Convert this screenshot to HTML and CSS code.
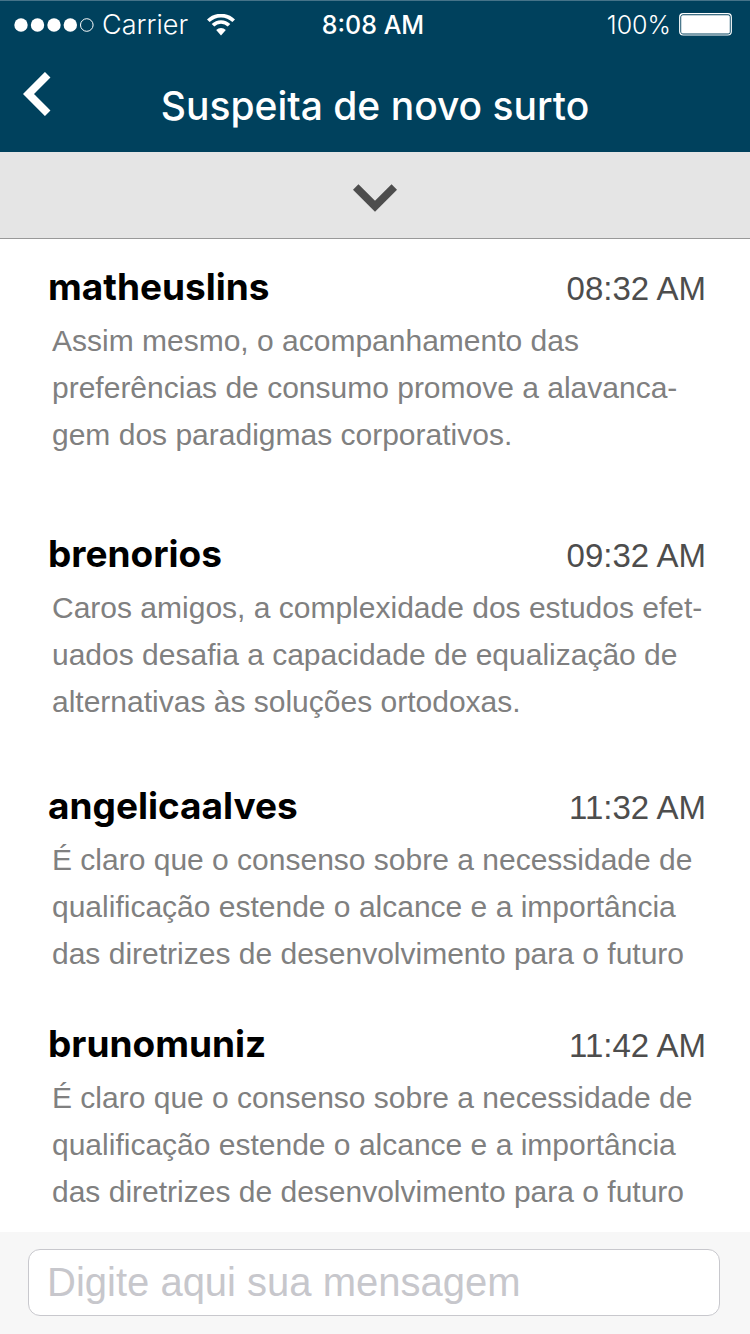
FILE: index.html
```html
<!DOCTYPE html>
<html lang="pt-BR">
<head>
<meta charset="utf-8">
<meta name="viewport" content="width=device-width, initial-scale=1">
<title>Suspeita de novo surto</title>
<link rel="stylesheet" href="styles.css">
</head>
<body>
<div class="app">
  <header class="header">
    <div class="status">
      <div class="status-left">
        <svg class="signal" viewBox="0 0 80 16" width="80" height="16" aria-hidden="true">
          <g fill="#fff"><circle cx="7" cy="8" r="6.7"/><circle cx="23.5" cy="8" r="6.7"/><circle cx="40" cy="8" r="6.7"/><circle cx="56.3" cy="8" r="6.7"/></g>
          <circle cx="72.8" cy="8" r="6.3" fill="none" stroke="#fff"/>
        </svg>
        <span class="carrier">Carrier</span>
        <svg class="wifi" viewBox="0 0 28 22" width="28" height="22" aria-hidden="true">
          <g fill="none" stroke="#fff" stroke-width="3.7"><path d="M1.300 6.800A18.100 18.100 0 0 1 26.700 6.800"/><path d="M6 11.300A11.300 11.300 0 0 1 22 11.300"/></g>
          <path fill="#fff" d="M9.200 16a7 7 0 0 1 9.600 0l-4.800 5.400z"/>
        </svg>
      </div>
      <span class="clock">8:08 AM</span>
      <div class="status-right">
        <span>100%</span>
        <svg viewBox="0 0 53 23" width="53" height="23" aria-hidden="true">
          <rect x=".7" y=".7" width="51.6" height="21.3" rx="3.5" fill="none" stroke="#fff" stroke-width="1.2"/>
          <rect x="2.2" y="2.2" width="48.6" height="18.300" rx="1.5" fill="#fff"/>
        </svg>
      </div>
    </div>
    <div class="nav">
      <button class="back" type="button" aria-label="Voltar">
        <svg viewBox="0 0 28 44" width="28" height="44" aria-hidden="true"><path d="M24.700 2.700L5.500 22L24.700 41.300" fill="none" stroke="#fff" stroke-width="7.800"/></svg>
      </button>
      <h1 class="title">Suspeita de novo surto</h1>
    </div>
  </header>
  <button class="expand" type="button" aria-label="Expandir">
    <svg viewBox="0 0 44 28" width="44" height="28" aria-hidden="true"><path d="M2.700 3L22 22.300L41.300 3" fill="none" stroke="#4d4d4d" stroke-width="7.800"/></svg>
  </button>
  <main class="messages">
    <article class="message roomy">
      <div class="meta"><h2 class="name">matheuslins</h2><time class="time">08:32 AM</time></div>
      <p class="text">Assim mesmo, o acompanhamento das<br>preferências de consumo promove a alavanca-<br>gem dos paradigmas corporativos.</p>
    </article>
    <article class="message medium">
      <div class="meta"><h2 class="name">brenorios</h2><time class="time">09:32 AM</time></div>
      <p class="text">Caros amigos, a complexidade dos estudos efet-<br>uados desafia a capacidade de equalização de<br>alternativas às soluções ortodoxas.</p>
    </article>
    <article class="message">
      <div class="meta"><h2 class="name">angelicaalves</h2><time class="time">11:32 AM</time></div>
      <p class="text">É claro que o consenso sobre a necessidade de<br>qualificação estende o alcance e a importância<br>das diretrizes de desenvolvimento para o futuro</p>
    </article>
    <article class="message last">
      <div class="meta"><h2 class="name">brunomuniz</h2><time class="time">11:42 AM</time></div>
      <p class="text">É claro que o consenso sobre a necessidade de<br>qualificação estende o alcance e a importância<br>das diretrizes de desenvolvimento para o futuro</p>
    </article>
  </main>
  <form class="composer">
    <input class="field" type="text" placeholder="Digite aqui sua mensagem" aria-label="Digite aqui sua mensagem">
  </form>
</div>
</body>
</html>
```
FILE: styles.css
```css
* {
  box-sizing: border-box;
}

body {
  margin: 0;
  background: #fff;
  font-family: "Liberation Sans", Arial, sans-serif;
}

h1,
h2,
p {
  margin: 0;
}

button {
  border: 0;
  padding: 0;
  cursor: pointer;
}

.app {
  display: flex;
  flex-direction: column;
  min-height: 100vh;
}

.header {
  background: #00415d;
  color: #fff;
  font-family: Inter, sans-serif;
  border-top: 1px solid #457389;
}

.status {
  display: grid;
  grid-template-columns: 1fr auto 1fr;
  align-items: center;
  height: 47px;
  padding: 0 18px 0 14px;
  font-size: 25px;
  font-weight: 300;
}

.status-left,
.status-right {
  display: flex;
  align-items: center;
  gap: 8px;
}

.status-right {
  justify-content: flex-end;
}

.carrier {
  padding-right: 11px;
  font-size: 27px;
}

.clock {
  font-weight: 500;
}

.nav {
  display: grid;
  grid-template-columns: 56px 1fr 56px;
  height: 104px;
  padding: 0 23px;
}

.back {
  display: flex;
  align-self: start;
  padding-top: 24px;
  background: none;
}

.title {
  padding-top: 34px;
  font-size: 39px;
  font-weight: 500;
  line-height: 48px;
  text-align: center;
  white-space: nowrap;
}

.expand {
  display: flex;
  align-items: center;
  justify-content: center;
  height: 87px;
  padding-top: 6px;
  background: #e5e5e5;
  border-bottom: 1px solid #999;
}

.messages {
  flex: 1;
  padding: 24px 44px 0 48px;
}

.message {
  padding-bottom: 43px;
}

.medium {
  padding-bottom: 57px;
}

.roomy {
  padding-bottom: 72px;
}

.last {
  padding-bottom: 0;
}

.meta {
  display: flex;
  align-items: baseline;
  justify-content: space-between;
  height: 54px;
}

.name {
  font-family: Inter, sans-serif;
  font-size: 37px;
  font-weight: 700;
  line-height: 48px;
}

.time {
  color: #4d4d4d;
  font-size: 33px;
  line-height: 48px;
}

.text {
  padding-left: 4px;
  color: #808080;
  font-size: 30px;
  line-height: 47px;
  white-space: nowrap;
}

.composer {
  padding: 17px 30px 18px 28px;
  background: #f7f7f7;
}

.field {
  display: block;
  width: 100%;
  height: 67px;
  padding: 0 18px;
  border: 1px solid #c8c8cd;
  border-radius: 12px;
  background: #fff;
  color: #4d4d4d;
  font-family: inherit;
  font-size: 40px;
}

.field::placeholder {
  color: #c7c7cc;
  opacity: 1;
}
```
